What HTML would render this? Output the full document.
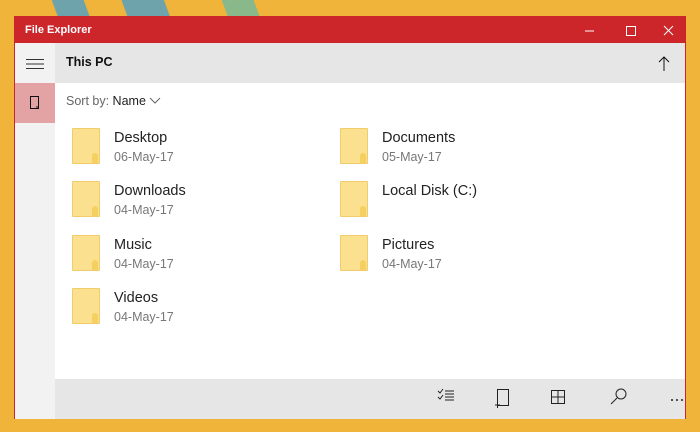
<!DOCTYPE html>
<html><head><meta charset="utf-8"><style>
*{margin:0;padding:0;box-sizing:border-box}
html,body{width:700px;height:432px;overflow:hidden}
body{background:#f0b43a;font-family:"Segoe UI","Liberation Sans",sans-serif;position:relative}
.streak{position:absolute;background:#4f9fc8;opacity:.8;transform:rotate(-20deg)}
.win{position:absolute;left:14px;top:16px;width:672px;height:403px;background:#fff;border:1px solid #c9262c}
.title{position:absolute;left:0;top:0;width:670px;height:26px;background:#cc262b;color:#fff;font-size:11px;font-weight:600;padding:7px 0 0 10px}
.side{position:absolute;left:0;top:26px;width:40px;height:376px;background:#f2f2f2}
.sel{position:absolute;left:0;top:66px;width:40px;height:40px;background:#e3a3a4}
.head{position:absolute;left:40px;top:26px;width:630px;height:40px;background:#e6e6e6;font-size:12.5px;font-weight:bold;padding:12px 0 0 11px;color:#111}
.bot{position:absolute;left:40px;top:362px;width:630px;height:40px;background:#e6e6e6}
.sort{position:absolute;left:51px;top:77px;font-size:12.5px;color:#666}
.sort b{color:#222;font-weight:normal}
.f{position:absolute;width:260px;height:40px}
.fi{position:absolute;left:0;top:0;width:28px;height:36px;background:#fbe08f;border:1px solid #f0cc6a;border-radius:1px}
.fi:after{content:"";position:absolute;right:1px;bottom:0;width:6px;height:10px;background:#f5cf60;border-radius:3px 3px 0 0}
.fn{position:absolute;left:42px;top:2px;font-size:14.5px;color:#222}
.fd{position:absolute;left:42px;top:22px;font-size:12.5px;color:#777}
</style></head><body>
<div class="streak" style="left:60px;top:-10px;width:30px;height:60px"></div>
<div class="streak" style="left:130px;top:-10px;width:40px;height:60px"></div>
<div class="streak" style="left:230px;top:-10px;width:30px;height:60px;background:#6fb9a0"></div>
<div class="win">
<div class="title">File Explorer
<svg style="position:absolute;left:570px;top:8px" width="90" height="12"><line x1="0" y1="6" x2="9" y2="6" stroke="#fff"/><rect x="41.5" y="1.5" width="9" height="9" fill="none" stroke="#fff"/><path d="M79 1l9 9M88 1l-9 9" stroke="#fff"/></svg></div>
<div class="side"><svg style="position:absolute;left:11px;top:16px" width="18" height="10"><path d="M0 .5h18M0 5h18M0 9.5h18" stroke="#333"/></svg></div>
<div class="sel"><svg style="position:absolute;left:15px;top:13px" width="10" height="14"><rect x=".5" y=".5" width="8" height="12" fill="none" stroke="#111"/><path d="M7 13v-3" stroke="#111"/></svg></div>
<div class="head">This PC<svg style="position:absolute;left:603px;top:13px" width="12" height="15"><path d="M6 15V1M1 6l5-5 5 5" stroke="#111" fill="none"/></svg></div>
<div class="sort">Sort by: <b>Name</b> <svg width="12" height="8"><path d="M1 1l5 5 5-5" stroke="#666" fill="none"/></svg></div>
<div class="f" style="left:57px;top:111px"><div class="fi"></div><div class="fn">Desktop</div><div class="fd">06-May-17</div></div>
<div class="f" style="left:325px;top:111px"><div class="fi"></div><div class="fn">Documents</div><div class="fd">05-May-17</div></div>
<div class="f" style="left:57px;top:164px"><div class="fi"></div><div class="fn">Downloads</div><div class="fd">04-May-17</div></div>
<div class="f" style="left:325px;top:164px"><div class="fi"></div><div class="fn">Local Disk (C:)</div></div>
<div class="f" style="left:57px;top:218px"><div class="fi"></div><div class="fn">Music</div><div class="fd">04-May-17</div></div>
<div class="f" style="left:325px;top:218px"><div class="fi"></div><div class="fn">Pictures</div><div class="fd">04-May-17</div></div>
<div class="f" style="left:57px;top:271px"><div class="fi"></div><div class="fn">Videos</div><div class="fd">04-May-17</div></div>
<div class="bot"><svg width="630" height="40">
<g stroke="#222" fill="none"><path d="M383 12l2 2 3-4M383 18l2 2 3-4M390 12h9M390 15h9M390 18h9M390 21h9"/>
<rect x="442.5" y="10.5" width="11" height="16"/><path d="M440 26h5M442.5 24v5"/>
<rect x="496.5" y="11.5" width="13" height="13"/><path d="M503 11v14M496 18h14"/>
<circle cx="566" cy="15" r="5"/><path d="M562 19l-6 6"/></g>
<g fill="#222"><circle cx="617" cy="21" r="1"/><circle cx="622" cy="21" r="1"/><circle cx="627" cy="21" r="1"/></g>
</svg></div>
</div>
</body></html>
